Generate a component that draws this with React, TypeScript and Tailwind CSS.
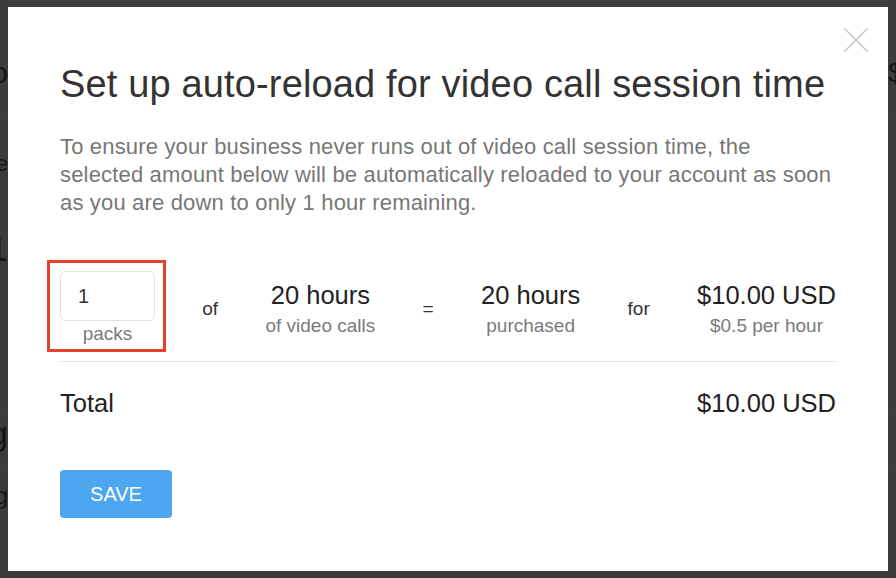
import React from "react";

function Edge({ side, children }: { side: "left" | "right"; children: React.ReactNode }) {
  return (
    <div
      className={
        side === "left"
          ? "w-[8px] overflow-hidden flex justify-end whitespace-nowrap"
          : "w-[8px] overflow-hidden flex justify-start whitespace-nowrap"
      }
    >
      {children}
    </div>
  );
}

function CloseIcon() {
  return (
    <svg className="block" width="24" height="24" viewBox="0 0 24 24" fill="none">
      <path d="M1 1L23 23M23 1L1 23" stroke="#c8c8c8" strokeWidth="1.6" strokeLinecap="round" />
    </svg>
  );
}

export default function App() {
  return (
    <div
      className="relative w-[896px] h-[578px] overflow-hidden bg-[#f0f0f0] text-[#555]"
      style={{ fontFamily: '"Liberation Sans", Arial, Helvetica, sans-serif' }}
    >
      {/* page behind the dialog */}
      <div className="flex flex-col">
        <div className="h-[113px] flex justify-between border-b border-white pt-[58px]">
          <Edge side="left">
            <span className="text-[30px] leading-[30px]">Plano</span>
          </Edge>
          <Edge side="right">
            <span className="text-[28px] leading-[30px]">$10.00</span>
          </Edge>
        </div>
        <div className="h-[298px] flex flex-col border-b border-white pt-[38px]">
          <Edge side="left">
            <span className="text-[22px] leading-[26px]">Time</span>
          </Edge>
          <div className="mt-[52px]">
            <Edge side="left">
              <span className="text-[35px] leading-[40px]">1</span>
            </Edge>
          </div>
        </div>
        <div className="h-[58px] flex items-start border-b border-white pt-[2px]">
          <Edge side="left">
            <span className="text-[34px] leading-[40px]">Billing</span>
          </Edge>
        </div>
        <div className="pt-[13px]">
          <Edge side="left">
            <span className="text-[24px] leading-[28px]">Pricing</span>
          </Edge>
        </div>
      </div>

      {/* overlay */}
      <div className="absolute inset-0 bg-black/75 pt-[7px] pl-[8px]">
        <div className="relative w-[880px] h-[564px] bg-white px-[52px] pt-[54px]">
          <button className="absolute top-[21px] right-[20px] block">
            <CloseIcon />
          </button>

          <h1 className="text-[38px] leading-[46px] tracking-[0.15px] text-[#333] whitespace-nowrap">
            Set up auto-reload for video call session time
          </h1>
          <p className="mt-[26px] text-[22px] leading-[28px] tracking-[0.17px] text-[#777] whitespace-nowrap">
            To ensure your business never runs out of video call session time, the
            <br />
            selected amount below will be automatically reloaded to your account as soon
            <br />
            as you are down to only 1 hour remaining.
          </p>

          <div className="mt-[54px] pb-[16px] border-b border-[#e6e6e6] flex justify-between items-start">
            <div className="relative flex flex-col items-center">
              <div className="w-[95px] h-[50px] rounded-[5px] border border-[#e2e2e2] flex items-center pl-[17px] text-[20px] text-[#333]">
                1
              </div>
              <div className="mt-[2px] text-[19px] leading-[22px] text-[#7a7a7a]">packs</div>
              <div className="absolute left-[-13px] top-[-11px] w-[119px] h-[92px] border-[3px] border-[#e5422c]" />
            </div>

            <div className="pt-[26px] text-[19px] leading-[24px] text-[#333]">of</div>

            <div className="pt-[9px] flex flex-col items-center">
              <div className="text-[25.5px] leading-[30px] text-[#222]">20 hours</div>
              <div className="mt-[4px] text-[19px] leading-[24px] text-[#7a7a7a]">of video calls</div>
            </div>

            <div className="pt-[26px] text-[19px] leading-[24px] text-[#333]">=</div>

            <div className="pt-[9px] flex flex-col items-center">
              <div className="text-[25.5px] leading-[30px] text-[#222]">20 hours</div>
              <div className="mt-[4px] text-[19px] leading-[24px] text-[#7a7a7a]">purchased</div>
            </div>

            <div className="pt-[26px] text-[19px] leading-[24px] text-[#333]">for</div>

            <div className="pt-[9px] flex flex-col items-center">
              <div className="text-[25.5px] leading-[30px] text-[#222]">$10.00 USD</div>
              <div className="mt-[4px] text-[19px] leading-[24px] text-[#7a7a7a]">$0.5 per hour</div>
            </div>
          </div>

          <div className="mt-[26px] flex justify-between text-[25.5px] leading-[30px] text-[#222]">
            <span>Total</span>
            <span>$10.00 USD</span>
          </div>

          <button className="mt-[52px] w-[112px] h-[48px] rounded-[4px] bg-[#4da7f0] text-white text-[20px] leading-none">
            SAVE
          </button>
        </div>
      </div>
    </div>
  );
}
